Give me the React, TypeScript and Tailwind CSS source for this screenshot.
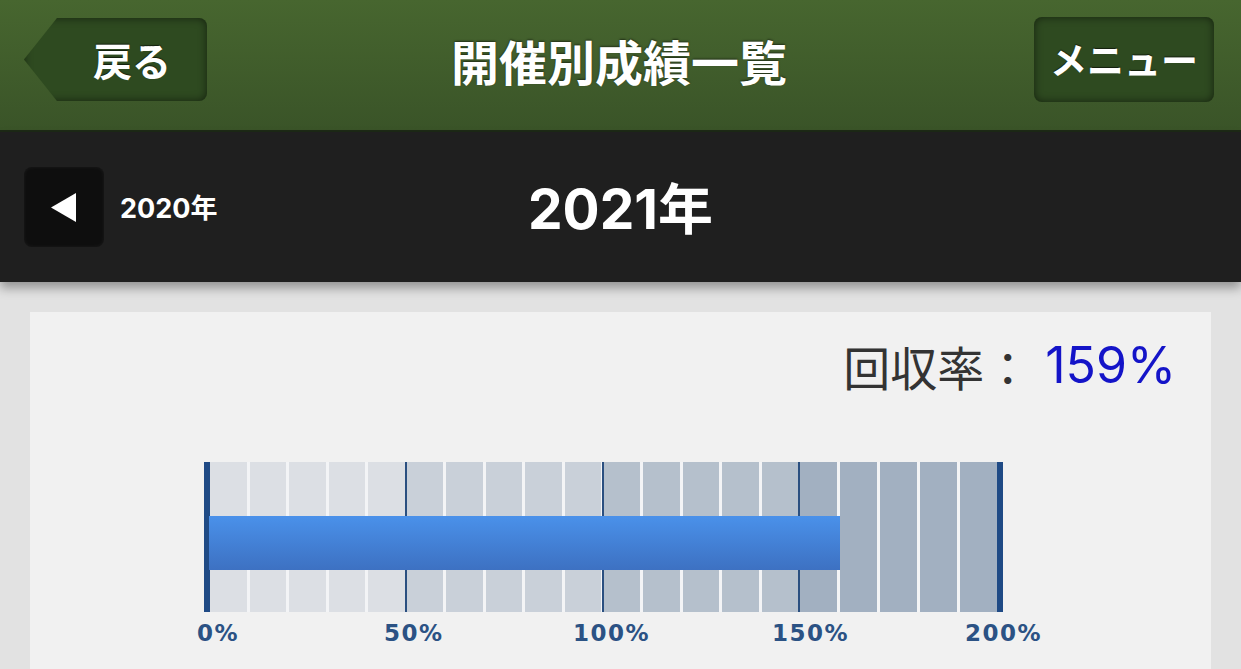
const groupColors = ['bg-[#dcdfe4]', 'bg-[#c9d0d9]', 'bg-[#b5c0cc]', 'bg-[#a2b0c1]'];

const axisLabels = [
  { text: '0%', left: 'left-[-7px]' },
  { text: '50%', left: 'left-[180px]' },
  { text: '100%', left: 'left-[369px]' },
  { text: '150%', left: 'left-[568px]' },
  { text: '200%', left: 'left-[761px]' },
];

const jp = "font-['Noto_Sans_CJK_JP',sans-serif]";
const num = "font-['Inter','Noto_Sans_CJK_JP',sans-serif]";

const RecoveryChart = ({ rate }: { rate: number }) => {
  // 0%〜200% を 787px の内側に描く
  const barWidth = Math.min(rate, 200) * (787 / 200) + 5;

  return (
    <div className="relative ml-[174px] w-[799px]">
      <div className="flex h-[150px]">
        <div className="w-[6px] bg-[#1f4a85]" />
        {groupColors.map((color, gi) => (
          <div key={gi} className="flex flex-1">
            <div className="flex flex-1 gap-[3px] bg-[#f3f4f6]">
              {[0, 1, 2, 3, 4].map((ci) => (
                <div key={ci} className={`flex-1 ${color}`} />
              ))}
            </div>
            {gi < 3 && <div className="w-[2px] bg-[#2a4f80]" />}
          </div>
        ))}
        <div className="w-[6px] bg-[#1f4a85]" />
      </div>

      <div
        className="absolute left-[5px] top-[54px] h-[54px] bg-linear-to-b from-[#4a91ea] to-[#3d71c2]"
        style={{ width: `${barWidth}px` }}
      />

      <div className="relative h-[44px]">
        {axisLabels.map((l) => (
          <span
            key={l.text}
            className={`absolute top-[7px] ${l.left} font-['DejaVu_Sans',sans-serif] text-[23px] font-bold leading-[28px] tracking-[1.5px] text-[#2b5284]`}
          >
            {l.text}
          </span>
        ))}
      </div>
    </div>
  );
};

export default function App() {
  return (
    <div className={`min-h-screen bg-[#e2e2e2] ${jp}`}>
      {/* ヘッダー */}
      <header className="h-[132px] border-b-2 border-[#1d2916] bg-linear-to-b from-[#47662f] to-[#3a5428] pl-6 pr-[27px] pt-[17px]">
        <div className="grid h-[84px] grid-cols-[1fr_auto_1fr] items-center">
          <div className="flex">
            <button className="flex h-[83px] w-[183px] items-center justify-center rounded-r-lg bg-[#2e4a20] pl-[33px] shadow-[inset_0_0_8px_rgba(0,0,0,0.55)] [clip-path:polygon(33px_0,100%_0,100%_100%,33px_100%,0_50%)]">
              <span className="text-[39px] font-bold leading-none text-white [text-shadow:0_-1px_1px_rgba(0,0,0,0.6)]">
                戻る
              </span>
            </button>
          </div>
          <h1 className="text-[48px] font-bold leading-none text-white [text-shadow:0_-1px_2px_rgba(0,0,0,0.5)]">
            開催別成績一覧
          </h1>
          <div className="flex justify-end">
            <button className="flex h-[85px] w-[180px] items-center justify-center rounded-lg bg-[#2e4a20] shadow-[inset_0_0_8px_rgba(0,0,0,0.55)]">
              <span className="text-[37px] font-bold leading-none text-white [text-shadow:0_-1px_1px_rgba(0,0,0,0.6)]">
                メニュー
              </span>
            </button>
          </div>
        </div>
      </header>

      {/* 年切り替え */}
      <div className="relative z-10 grid h-[150px] grid-cols-[1fr_auto_1fr] items-center bg-[#1f1f1f] px-6 shadow-[0_6px_10px_rgba(0,0,0,0.35)]">
        <div className="flex items-center">
          <button className="flex h-[80px] w-[80px] items-center justify-center rounded-lg bg-[#0e0e0e] shadow-[inset_0_0_4px_rgba(255,255,255,0.06)]">
            <svg width="25" height="29" viewBox="0 0 25 29" className="mr-[2px]">
              <polygon points="25,0 25,29 0,14.5" fill="#fff" />
            </svg>
          </button>
          <span className={`ml-[16px] ${num} text-[27px] font-bold leading-none text-white`}>
            2020<span className={jp}>年</span>
          </span>
        </div>
        <div className={`${num} text-[55px] font-bold leading-none text-white`}>
          2021<span className={jp}>年</span>
        </div>
        <div />
      </div>

      {/* 回収率 */}
      <main className="mx-[30px] mt-[30px] min-h-[357px] bg-[#f1f1f1] pt-[25px]">
        <div className="flex h-[56px] items-center justify-end pr-[35px]">
          <span className="text-[47px] leading-none text-[#333333]">回収率：</span>
          <span className={`ml-[14px] ${num} text-[50px] leading-none text-[#1414c8]`}>159%</span>
        </div>
        <div className="mt-[69px]">
          <RecoveryChart rate={159} />
        </div>
      </main>
    </div>
  );
}
